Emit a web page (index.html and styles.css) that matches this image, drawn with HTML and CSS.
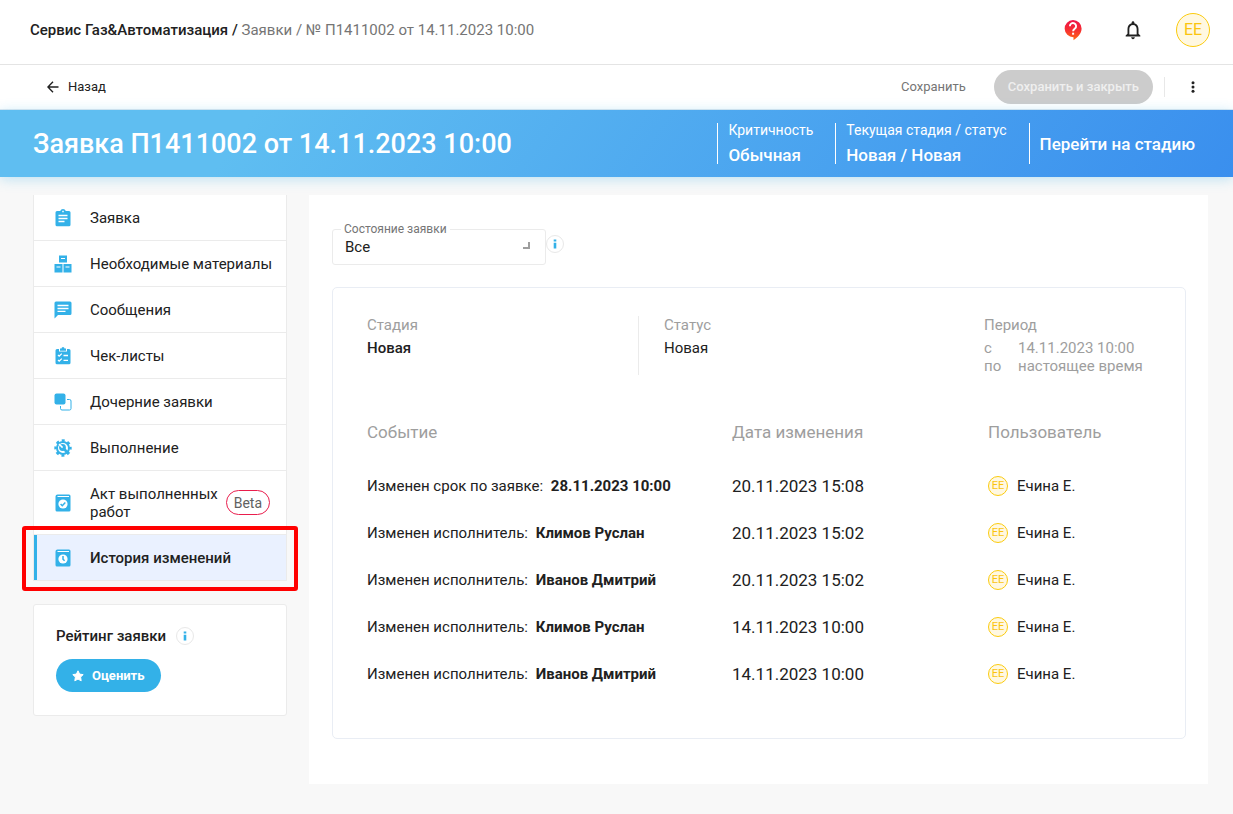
FILE: index.html
```html
<!DOCTYPE html>
<html lang="ru">
<head>
<meta charset="utf-8">
<meta name="viewport" content="width=device-width, initial-scale=1">
<title>Заявка П1411002</title>
<link rel="stylesheet" href="styles.css">
</head>
<body>
<header class="topbar">
  <nav class="crumbs" aria-label="Навигация">
    <a class="crumb-root" href="#">Сервис Газ&amp;Автоматизация /</a>
    <a href="#">Заявки</a> / <span>№ П1411002 от 14.11.2023 10:00</span>
  </nav>
  <div class="top-actions">
    <button class="icon-btn" type="button" aria-label="Помощь">
      <svg width="18" height="22" viewBox="0 0 18 22">
        <defs><linearGradient id="help" x1="0" y1="0" x2="0" y2="1"><stop offset="0" stop-color="#ee1248"/><stop offset=".5" stop-color="#f62f32"/><stop offset="1" stop-color="#ff6a14"/></linearGradient></defs>
        <path d="M9 1a8.6 8.6 0 0 1 8.6 8.6c0 5-3.600 8.700-8.100 11.600v-3A8.600 8.600 0 1 1 9 1z" fill="url(#help)"/>
        <path d="M5.900 7.200a3.100 3.100 0 1 1 5 2.400c-1 .8-1.800 1.300-1.800 2.700" fill="none" stroke="#fff" stroke-width="1.900"/>
        <rect x="8.100" y="13.700" width="2" height="2" fill="#fff"/>
      </svg>
    </button>
    <button class="icon-btn" type="button" aria-label="Уведомления">
      <svg width="22" height="22" viewBox="0 0 24 24"><path fill="#212121" d="M12 22c1.100 0 2-.9 2-2h-4c0 1.100.9 2 2 2zm6-6v-5c0-3.070-1.630-5.640-4.500-6.320V4c0-.83-.67-1.500-1.500-1.500s-1.500.67-1.500 1.500v.68C7.640 5.360 6 7.920 6 11v5l-2 2v1h16v-1l-2-2zm-2 1H8v-6c0-2.480 1.510-4.500 4-4.500s4 2.020 4 4.500v6z"/></svg>
    </button>
    <span class="avatar avatar-lg">ЕЕ</span>
  </div>
</header>

<div class="toolbar">
  <button class="back" type="button">
    <svg width="12" height="12" viewBox="0 0 12 12"><path d="M11.500 6H1M6 .8.900 6 6 11.200" fill="none" stroke="#212121" stroke-width="1.400"/></svg>
    Назад
  </button>
  <div class="toolbar-actions">
    <button class="save" type="button">Сохранить</button>
    <button class="save-close" type="button" disabled>Сохранить и закрыть</button>
    <button class="more" type="button" aria-label="Ещё">
      <svg width="4" height="12" viewBox="0 0 4 12"><g fill="#212121"><circle cx="2" cy="1.700" r="1.500"/><circle cx="2" cy="6" r="1.500"/><circle cx="2" cy="10.300" r="1.500"/></g></svg>
    </button>
  </div>
</div>

<section class="banner">
  <h1>Заявка П1411002 от 14.11.2023 10:00</h1>
  <div class="facts">
    <div class="fact"><span>Критичность</span><strong>Обычная</strong></div>
    <div class="fact"><span>Текущая стадия / статус</span><strong>Новая / Новая</strong></div>
    <a class="fact fact-link" href="#">Перейти на стадию</a>
  </div>
</section>

<div class="page">
  <aside class="side">
    <nav class="menu" aria-label="Разделы заявки">
      <a class="item" href="#">
        <svg class="ico" viewBox="0 0 18 18"><path fill="#33b1e8" d="M3 2h3.200a3 3 0 0 1 5.600 0H15a1.500 1.500 0 0 1 1.500 1.500v12.200a1.500 1.500 0 0 1-1.500 1.500H3a1.500 1.500 0 0 1-1.500-1.500V3.500A1.500 1.500 0 0 1 3 2z"/><path d="M9 1.800v1.400M4.500 6.500h9M4.500 9.500h9M4.500 12.500h6" stroke="#fff" stroke-width="1.500"/></svg>
        Заявка</a>
      <a class="item" href="#">
        <svg class="ico" viewBox="0 0 18 18"><path fill="#33b1e8" d="M5 .5h8v7H5zM.5 9h8v8.500h-8zM9.500 9h8v8.500h-8z"/><path d="M7 3.500h4M2.500 12h4M11.500 12h4" stroke="#fff" stroke-width="1.200"/></svg>
        Необходимые материалы</a>
      <a class="item" href="#">
        <svg class="ico" viewBox="0 0 18 18"><path fill="#33b1e8" d="M2 .5h14a1.500 1.500 0 0 1 1.500 1.500v10.500A1.500 1.500 0 0 1 16 14H4L.5 17.500V2A1.500 1.500 0 0 1 2 .5z"/><path d="M3.500 4.500h11M3.500 7.500h11M3.500 10.300h8" stroke="#fff" stroke-width="1.300"/></svg>
        Сообщения</a>
      <a class="item" href="#">
        <svg class="ico" viewBox="0 0 18 18"><path fill="#33b1e8" d="M3 2h2v2.500h8V2h2a1.500 1.500 0 0 1 1.500 1.500v12.300a1.500 1.500 0 0 1-1.500 1.500H3a1.500 1.500 0 0 1-1.500-1.500V3.500A1.500 1.500 0 0 1 3 2zM6 1.500h1.500a1.500 1.500 0 0 1 3 0H12v2.200H6z"/><path d="m4 8 1.200 1.200L7.800 6.600M4 13l1.200 1.200 2.600-2.600M9.500 8.500h4.500M9.500 13.300h4.500" fill="none" stroke="#fff" stroke-width="1.300"/></svg>
        Чек-листы</a>
      <a class="item" href="#">
        <svg class="ico" viewBox="0 0 18 18"><rect x=".5" y=".5" width="11" height="11" rx="2" fill="#33b1e8"/><path d="M13 6.500h2.500a1.500 1.500 0 0 1 1.500 1.500v7.500a1.500 1.500 0 0 1-1.500 1.500H8a1.500 1.500 0 0 1-1.500-1.500V13" fill="none" stroke="#33b1e8"/></svg>
        Дочерние заявки</a>
      <a class="item" href="#">
        <svg class="ico" viewBox="0 0 18 18"><g fill="none" stroke="#33b1e8"><circle cx="9" cy="9" r="6" stroke-width="2"/><circle cx="9" cy="9" r="7.500" stroke-width="2.400" stroke-dasharray="3 2.890" stroke-dashoffset="1.500"/></g><circle cx="8.500" cy="8.500" r="3.400" fill="#33b1e8"/><path d="m9.500 9.500 4.500 4.500" stroke="#33b1e8" stroke-width="2.600"/><path d="M5 5l3.600 3.600" stroke="#fff" stroke-width="1.500"/></svg>
        Выполнение</a>
      <a class="item item-tall" href="#">
        <svg class="ico" viewBox="0 0 18 18"><path fill="#33b1e8" d="M3.500.5H15A1.500 1.500 0 0 1 16.500 2v14a1.500 1.500 0 0 1-1.500 1.500H3A1.500 1.500 0 0 1 1.500 16V2.500a2 2 0 0 1 2-2z"/><path d="M3.500 2.500h11.500" stroke="#fff" stroke-width="1"/><circle cx="9" cy="10" r="4.600" fill="#fff"/><path d="m6.600 10 1.700 1.700 3-3.200" fill="none" stroke="#33b1e8" stroke-width="1.500"/></svg>
        <span class="item-text">Акт выполненных работ</span><span class="beta">Beta</span></a>
      <a class="item item-active" href="#" aria-current="page">
        <svg class="ico" viewBox="0 0 18 18"><path fill="#33b1e8" d="M3.500.5H15A1.500 1.500 0 0 1 16.500 2v14a1.500 1.500 0 0 1-1.500 1.500H3A1.500 1.500 0 0 1 1.500 16V2.500a2 2 0 0 1 2-2z"/><path d="M3.500 2.500h11.500" stroke="#fff" stroke-width="1"/><circle cx="9" cy="10" r="4.600" fill="#fff"/><path d="M9 7v3.200l1.600 1.600" fill="none" stroke="#33b1e8" stroke-width="1.500"/></svg>
        История изменений</a>
    </nav>
    <section class="rating">
      <h2>Рейтинг заявки <button class="info" type="button" aria-label="О рейтинге"><svg width="4" height="10" viewBox="0 0 4 10"><path fill="#33b1e8" d="M.7.500h2.600v2H.7zM.7 3.800h2.600v5.700H.7z"/></svg></button></h2>
      <button class="rate" type="button">
        <svg width="12" height="12" viewBox="0 0 12 12"><path fill="#fff" stroke="#fff" stroke-linejoin="round" d="m6 .8 1.600 3.300 3.600.5-2.600 2.500.6 3.700L6 9.100l-3.200 1.700.6-3.700L.8 4.600l3.600-.5z"/></svg>
        Оценить
      </button>
    </section>
  </aside>

  <main class="main">
    <div class="filter">
      <div class="field">
        <label for="state">Состояние заявки</label>
        <select id="state"><option>Все</option></select>
        <i class="corner"></i>
      </div>
      <button class="info" type="button" aria-label="О состоянии"><svg width="4" height="10" viewBox="0 0 4 10"><path fill="#33b1e8" d="M.7.500h2.600v2H.7zM.7 3.800h2.600v5.700H.7z"/></svg></button>
    </div>

    <section class="card">
      <div class="summary">
        <div class="stage"><span class="muted">Стадия</span><strong>Новая</strong></div>
        <div class="status"><span class="muted">Статус</span><span>Новая</span></div>
        <div class="period muted">
          <span>Период</span>
          <dl><dt>с</dt><dd>14.11.2023 10:00</dd><dt>по</dt><dd>настоящее время</dd></dl>
        </div>
      </div>
      <table class="events">
        <colgroup><col class="col-event"><col class="col-date"><col></colgroup>
        <thead><tr><th scope="col">Событие</th><th scope="col">Дата изменения</th><th scope="col">Пользователь</th></tr></thead>
        <tbody>
          <tr><td>Изменен срок по заявке: <b>28.11.2023 10:00</b></td><td class="date">20.11.2023 15:08</td><td><span class="user"><span class="avatar">ЕЕ</span>Ечина Е.</span></td></tr>
          <tr><td>Изменен исполнитель: <b>Климов Руслан</b></td><td class="date">20.11.2023 15:02</td><td><span class="user"><span class="avatar">ЕЕ</span>Ечина Е.</span></td></tr>
          <tr><td>Изменен исполнитель: <b>Иванов Дмитрий</b></td><td class="date">20.11.2023 15:02</td><td><span class="user"><span class="avatar">ЕЕ</span>Ечина Е.</span></td></tr>
          <tr><td>Изменен исполнитель: <b>Климов Руслан</b></td><td class="date">14.11.2023 10:00</td><td><span class="user"><span class="avatar">ЕЕ</span>Ечина Е.</span></td></tr>
          <tr><td>Изменен исполнитель: <b>Иванов Дмитрий</b></td><td class="date">14.11.2023 10:00</td><td><span class="user"><span class="avatar">ЕЕ</span>Ечина Е.</span></td></tr>
        </tbody>
      </table>
    </section>
  </main>
</div>
</body>
</html>
```
FILE: styles.css
```css
* { box-sizing: border-box; }
body { margin: 0; background: #f8f8f8; color: #212121; font: 15px/18px Roboto, "Liberation Sans", sans-serif; }
a { color: inherit; text-decoration: none; }
button { margin: 0; padding: 0; border: 0; background: none; font: inherit; color: inherit; cursor: pointer; }
svg { display: block; flex: none; }
h1, h2, dl, dd { margin: 0; }

.topbar { display: flex; align-items: center; justify-content: space-between; height: 65px; padding: 0 23px 5px 30px; background: #fff; border-bottom: 1px solid #e4e4e4; }
.crumbs { color: #757575; }
.crumb-root { color: #212121; font-weight: 500; }
.top-actions { display: flex; align-items: center; gap: 26px; }
.icon-btn { display: grid; place-items: center; width: 34px; height: 34px; }
.avatar { display: grid; place-items: center; width: 20px; height: 20px; border: 1px solid #fbcb0e; border-radius: 50%; background: #fff8e1; color: #fbc40e; font-size: 11px; line-height: 12px; }
.avatar-lg { width: 34px; height: 34px; font-size: 16px; line-height: 18px; }

.toolbar { display: flex; align-items: center; justify-content: space-between; height: 45px; padding: 0 25px 0 47px; background: #fff; border-bottom: 1px solid #dfe8f0; font-size: 13px; }
.back { display: flex; align-items: center; gap: 9px; }
.toolbar-actions { display: flex; align-items: center; }
.save { margin-right: 28px; color: #757575; }
.save-close { height: 34px; padding: 0 14px; border-radius: 17px; background: #ccc; color: #efefef; font-weight: 500; cursor: default; }
.more { display: grid; place-items: center; width: 44px; height: 20px; margin-left: 11px; padding-left: 13px; border-left: 1px solid #e8e8e8; }

.banner { position: relative; display: flex; align-items: center; justify-content: space-between; height: 67px; padding: 0 38px 0 33px; background: linear-gradient(125deg, #5fbef1 20%, #3a8fee); box-shadow: 0 2px 12px rgba(51, 177, 232, .3); color: #fff; }
.banner h1 { font-size: 27px; font-weight: 500; line-height: 32px; }
.facts { display: flex; }
.fact { display: flex; flex-direction: column; gap: 7px; height: 41px; padding: 0 22px 0 10px; border-left: 1px solid #fff; font-size: 14px; line-height: 14px; }
.fact strong { font-size: 17px; font-weight: 500; line-height: 22px; }
.fact-link { justify-content: center; padding-right: 0; font-size: 17px; font-weight: 500; line-height: 22px; }

.page { display: flex; align-items: flex-start; gap: 22px; padding: 18px 25px 30px 33px; }
.side { flex: none; width: 254px; }
.menu { border: 1px solid #ebebeb; border-width: 0 1px; background: #fff; }
.item { position: relative; display: flex; align-items: center; height: 46px; padding: 0 16px 0 20px; border-bottom: 1px solid #ebebeb; white-space: nowrap; }
.ico { width: 18px; height: 18px; margin-right: 18px; }
.item-tall { height: 64px; }
.item-text { flex: 1; white-space: normal; }
.beta { height: 25px; padding: 0 7px; border: 1px solid #e91e4d; border-radius: 13px; color: #616161; font-size: 14px; line-height: 24px; }
.item-active { background: #eaf1ff; font-weight: 500; }
.item-active::before { content: ""; position: absolute; left: 0; top: 0; bottom: 0; width: 3px; background: #33b1e8; }
.item-active::after { content: ""; position: absolute; inset: -9px -12px -11px; border: 4px solid #f00; border-radius: 3px; }
.rating { margin-top: 23px; padding: 22px 22px 23px; border: 1px solid #ebebeb; border-radius: 3px; background: #fff; }
.rating h2 { display: flex; align-items: center; gap: 10px; font-size: 15px; font-weight: 500; line-height: 18px; }
.info { display: grid; place-items: center; flex: none; width: 18px; height: 18px; border: 1px solid #e8e8e8; border-radius: 50%; background: #fff; }
.rate { display: flex; align-items: center; gap: 8px; height: 33px; margin-top: 14px; padding: 0 16px; border-radius: 17px; background: #33b1e8; color: #fff; font-size: 13px; font-weight: 700; }

.main { flex: 1; min-width: 0; padding: 34px 22px 45px 23px; background: #fff; }
.filter { display: flex; align-items: flex-start; }
.filter .info { margin-top: 6px; }
.field { position: relative; width: 214px; }
.field label { position: absolute; left: 9px; top: -9px; padding: 0 3px; background: #fff; color: #757575; font-size: 12px; line-height: 18px; }
.field select { display: block; width: 100%; height: 36px; padding: 0 12px; border: 1px solid #ebebeb; border-radius: 3px; background: #fff; color: #212121; font: inherit; appearance: none; }
.corner { position: absolute; right: 16px; top: 13px; width: 7px; height: 7px; border: solid #9e9e9e; border-width: 0 2px 2px 0; pointer-events: none; }

.card { margin-top: 22px; padding: 28px 34px 41px; border: 1px solid #e9edf4; border-radius: 5px; }
.summary { display: grid; grid-template-columns: 272px 1fr 167px; }
.summary > div { display: flex; flex-direction: column; gap: 5px; }
.stage { border-right: 1px solid #ebebeb; }
.stage strong { font-weight: 500; }
.status { padding-left: 25px; }
.muted { color: #9e9e9e; }
.period dl { display: grid; grid-template-columns: 34px 1fr; }

.events { width: 100%; margin-top: 27px; border-collapse: collapse; table-layout: fixed; }
.col-event { width: 365px; }
.col-date { width: 256px; }
.events th, .events td { height: 47px; padding: 0; text-align: left; }
.events thead th { height: 60px; color: #9e9e9e; font-size: 17px; font-weight: 400; }
.events b { margin-left: 4px; font-weight: 700; }
.events .date { font-size: 17px; }
.user { display: flex; align-items: center; gap: 9px; }
```
